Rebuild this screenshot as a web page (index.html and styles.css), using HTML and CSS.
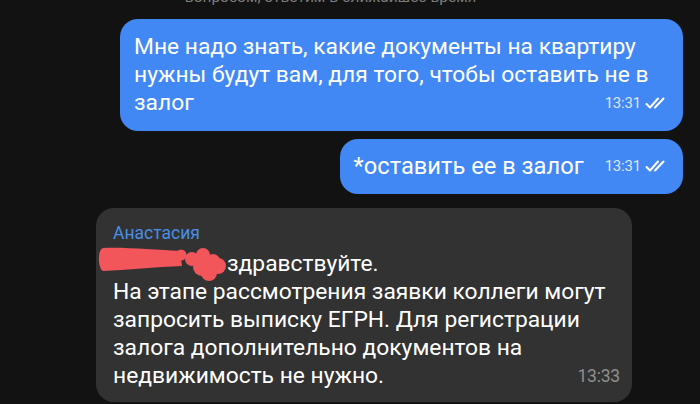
FILE: index.html
```html
<!DOCTYPE html>
<html lang="ru">
<head>
<meta charset="utf-8">
<link rel="stylesheet" href="styles.css">
</head>
<body>
<div class="chat">
  <div class="sys">вопросом, ответим в ближайшее время</div>

  <div class="bubble out b1">
    Мне надо знать, какие документы на квартиру<br>нужны будут вам, для того, чтобы оставить не в<br><span class="meta"><span class="time">13:31</span><svg class="ticks" viewBox="0 0 22 12" width="22" height="12"><path d="M1.5 7 L5 10.5 L13 1.5 M10 10.5 L18.5 1.5" fill="none" stroke="#fff" stroke-width="2" stroke-linecap="round" stroke-linejoin="round"/></svg></span>залог
  </div>

  <div class="bubble out b2">
    <span class="txt">*оставить ее в залог</span><span class="meta inline"><span class="time">13:31</span><svg class="ticks" viewBox="0 0 22 12" width="22" height="12"><path d="M1.5 7 L5 10.5 L13 1.5 M10 10.5 L18.5 1.5" fill="none" stroke="#fff" stroke-width="2" stroke-linecap="round" stroke-linejoin="round"/></svg></span>
  </div>

  <div class="bubble in b3">
    <div class="name">Анастасия</div>
    <div class="body"><span class="redact"><svg class="scribble" viewBox="0 0 135 45" width="135" height="45"><g fill="#f2555a"><path d="M7 8 C 30 7, 60 10, 84 11 L 86 26 C 60 27, 30 30, 7 31 C 2 29, 1 10, 7 8 Z"/><circle cx="85" cy="15" r="5.5"/><circle cx="96" cy="19" r="7"/><circle cx="107" cy="15" r="7"/><circle cx="106" cy="27" r="9"/><circle cx="113" cy="33" r="8"/><circle cx="122" cy="26" r="8"/><circle cx="117" cy="21" r="7"/></g></svg></span>здравствуйте.<br>На этапе рассмотрения заявки коллеги могут<br>запросить выписку ЕГРН. Для регистрации<br>залога дополнительно документов на<br><span class="meta grey"><span class="time">13:33</span></span>недвижимость не нужно.</div>
  </div>
</div>
</body>
</html>
```

FILE: styles.css
```css
html, body {
  margin: 0;
  padding: 0;
  background: #121212;
  overflow: hidden;
}
body {
  width: 700px;
  height: 404px;
  font-family: Roboto, "Noto Sans", sans-serif;
  color: #fff;
}
.chat {
  display: flex;
  flex-direction: column;
  padding: 0 17px 0 96px;
}
.sys {
  margin-top: -13px;
  height: 20px;
  line-height: 20px;
  font-size: 15.5px;
  color: #7d7d7d;
  text-align: center;
  padding-right: 118px;
}
.bubble {
  border-radius: 18px;
  line-height: 28px;
}
.out {
  background: #4288f5;
  align-self: flex-end;
}
.b1 {
  margin-top: 12px;
  width: 563px;
  box-sizing: border-box;
  padding: 14px 16px 14px 14px;
  font-size: 22.8px;
  white-space: nowrap;
}
.b2 {
  margin-top: 8px;
  padding: 13px 16px 14px 14px;
  display: flex;
  align-items: center;
  font-size: 23.7px;
}
.meta {
  float: right;
  display: flex;
  align-items: center;
  height: 28px;
  margin-left: 8px;
}
.meta.inline {
  float: none;
  margin-left: 21px;
}
.time {
  font-size: 15px;
  color: rgba(255, 255, 255, 0.82);
  letter-spacing: -0.2px;
}
.ticks {
  margin-left: 4px;
  display: block;
}
.in {
  background: #323232;
  align-self: flex-start;
  font-size: 22.8px;
}
.b3 {
  margin-top: 14px;
  width: 536px;
  box-sizing: border-box;
  padding: 14px 12px 12px 17px;
}
.name {
  font-size: 17.5px;
  line-height: 22px;
  color: #4a8fe7;
}
.body {
  margin-top: 6px;
}
.meta.grey .time {
  font-size: 17.5px;
  color: #8e8e8e;
}
.redact {
  display: inline-block;
  width: 114px;
  height: 1px;
  position: relative;
}
.scribble {
  position: absolute;
  left: -17px;
  top: -30px;
}
```
